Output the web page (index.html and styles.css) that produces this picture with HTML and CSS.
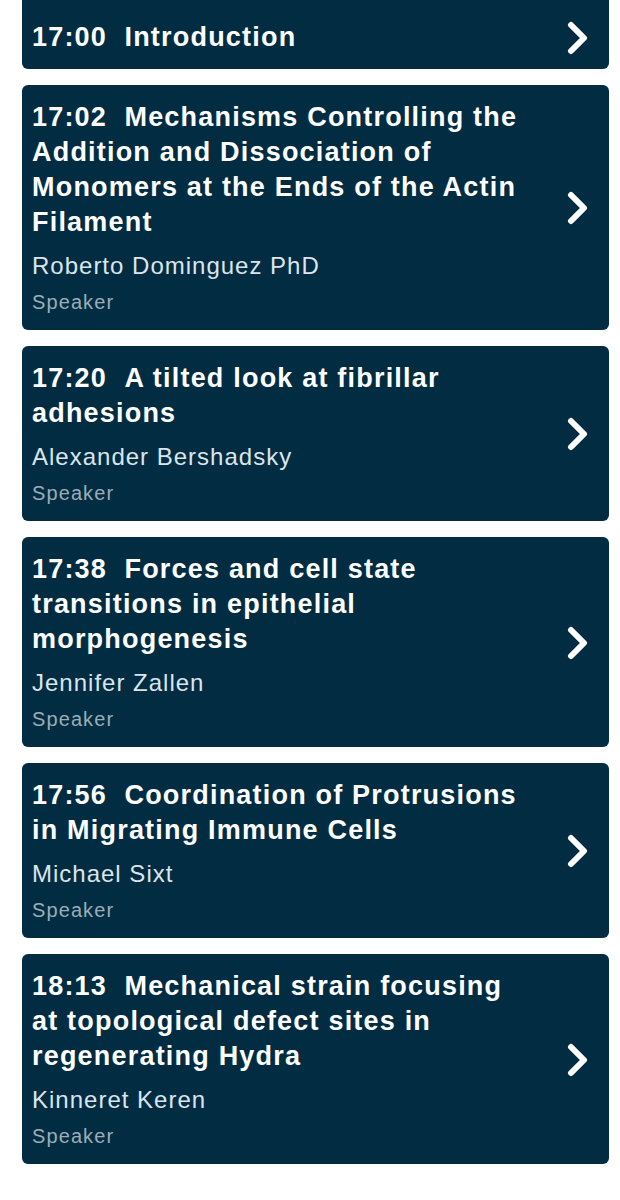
FILE: index.html
```html
<!DOCTYPE html>
<html lang="en">
<head>
    <meta charset="UTF-8">
    <meta name="viewport" content="width=device-width, initial-scale=1.0">
    <title>Session Programme</title>
    <link rel="stylesheet" href="styles.css">
</head>
<body>
    <div class="talk-list">
        <a class="talk talk-short" href="#">
            <div class="talk-text">
                <div class="talk-title">17:00&nbsp;&nbsp;Introduction</div>
            </div>
            <svg class="chevron" viewBox="0 0 22 34"><path d="M4 4 L17 17 L4 30"/></svg>
        </a>

        <a class="talk" href="#">
            <div class="talk-text">
                <div class="talk-title">17:02&nbsp;&nbsp;Mechanisms Controlling the Addition and Dissociation of Monomers at the Ends of the Actin Filament</div>
                <div class="talk-speaker">Roberto Dominguez PhD</div>
                <div class="talk-role">Speaker</div>
            </div>
            <svg class="chevron" viewBox="0 0 22 34"><path d="M4 4 L17 17 L4 30"/></svg>
        </a>

        <a class="talk" href="#">
            <div class="talk-text">
                <div class="talk-title">17:20&nbsp;&nbsp;A tilted look at fibrillar adhesions</div>
                <div class="talk-speaker">Alexander Bershadsky</div>
                <div class="talk-role">Speaker</div>
            </div>
            <svg class="chevron" viewBox="0 0 22 34"><path d="M4 4 L17 17 L4 30"/></svg>
        </a>

        <a class="talk" href="#">
            <div class="talk-text">
                <div class="talk-title">17:38&nbsp;&nbsp;Forces and cell state transitions in epithelial morphogenesis</div>
                <div class="talk-speaker">Jennifer Zallen</div>
                <div class="talk-role">Speaker</div>
            </div>
            <svg class="chevron" viewBox="0 0 22 34"><path d="M4 4 L17 17 L4 30"/></svg>
        </a>

        <a class="talk" href="#">
            <div class="talk-text">
                <div class="talk-title">17:56&nbsp;&nbsp;Coordination of Protrusions in Migrating Immune Cells</div>
                <div class="talk-speaker">Michael Sixt</div>
                <div class="talk-role">Speaker</div>
            </div>
            <svg class="chevron" viewBox="0 0 22 34"><path d="M4 4 L17 17 L4 30"/></svg>
        </a>

        <a class="talk" href="#">
            <div class="talk-text">
                <div class="talk-title">18:13&nbsp;&nbsp;Mechanical strain focusing at topological defect sites in regenerating Hydra</div>
                <div class="talk-speaker">Kinneret Keren</div>
                <div class="talk-role">Speaker</div>
            </div>
            <svg class="chevron" viewBox="0 0 22 34"><path d="M4 4 L17 17 L4 30"/></svg>
        </a>
    </div>
</body>
</html>
```

FILE: styles.css
```css
body {
    font-family: "Liberation Sans", Arial, sans-serif;
    margin: 0;
    padding: 0 11px 0 22px;
    background-color: #ffffff;
}
.talk-list {
    display: flex;
    flex-direction: column;
    gap: 16px;
    margin-top: -6px;
}
.talk {
    display: flex;
    align-items: center;
    gap: 35px;
    padding: 15px 20px 14px 10px;
    background-color: #022c42;
    border-radius: 6px;
    text-decoration: none;
}
.talk-short {
    padding-top: 26px;
    padding-bottom: 14px;
}
.talk-text {
    flex: 1;
}
.talk-title {
    color: #ffffff;
    font-size: 27px;
    font-weight: bold;
    line-height: 35px;
    letter-spacing: 1.2px;
}
.talk-speaker {
    color: #dbe5eb;
    font-size: 24px;
    line-height: 36px;
    letter-spacing: 1px;
    margin-top: 8px;
}
.talk-role {
    color: #9badb8;
    font-size: 20px;
    line-height: 28px;
    letter-spacing: 1.1px;
    margin-top: 4px;
}
.chevron {
    width: 22px;
    height: 34px;
    flex-shrink: 0;
}
.chevron path {
    fill: none;
    stroke: #ffffff;
    stroke-width: 6;
    stroke-linecap: round;
    stroke-linejoin: round;
}
```
